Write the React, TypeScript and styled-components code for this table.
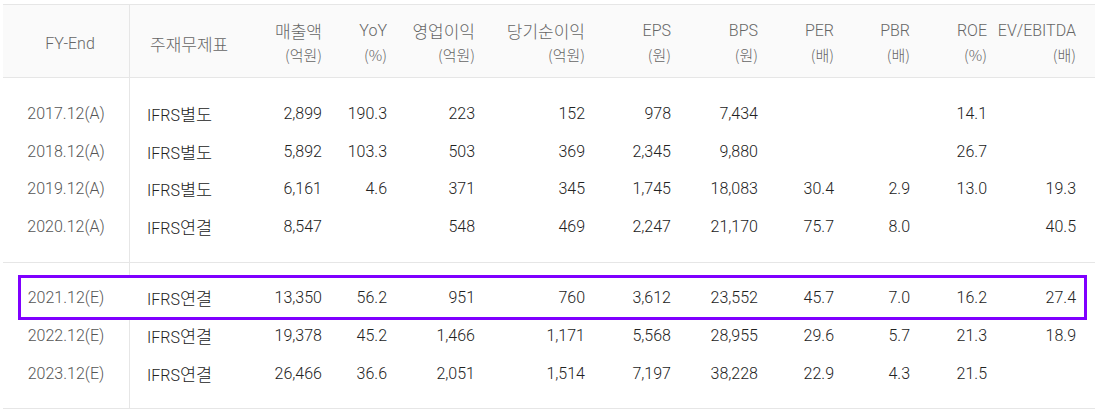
import * as React from "react"
import styled, { createGlobalStyle, css } from 'styled-components';

type Row = string[];

const actualRows: Row[] = [
    ["2017.12(A)", "별도", "2,899", "190.3", "223", "152", "978", "7,434", "", "", "14.1", ""],
    ["2018.12(A)", "별도", "5,892", "103.3", "503", "369", "2,345", "9,880", "", "", "26.7", ""],
    ["2019.12(A)", "별도", "6,161", "4.6", "371", "345", "1,745", "18,083", "30.4", "2.9", "13.0", "19.3"],
    ["2020.12(A)", "연결", "8,547", "", "548", "469", "2,247", "21,170", "75.7", "8.0", "", "40.5"],
];

const estimateRows: Row[] = [
    ["2021.12(E)", "연결", "13,350", "56.2", "951", "760", "3,612", "23,552", "45.7", "7.0", "16.2", "27.4"],
    ["2022.12(E)", "연결", "19,378", "45.2", "1,466", "1,171", "5,568", "28,955", "29.6", "5.7", "21.3", "18.9"],
    ["2023.12(E)", "연결", "26,466", "36.6", "2,051", "1,514", "7,197", "38,228", "22.9", "4.3", "21.5", ""],
];

const headers: [string, string][] = [
    ["매출액", "(억원)"],
    ["YoY", "(%)"],
    ["영업이익", "(억원)"],
    ["당기순이익", "(억원)"],
    ["EPS", "(원)"],
    ["BPS", "(원)"],
    ["PER", "(배)"],
    ["PBR", "(배)"],
    ["ROE", "(%)"],
    ["EV/EBITDA", "(배)"],
];

const isHangul = (s: string) => /[\uac00-\ud7a3]/.test(s);

export default function App() {
    return (
        <>
            <GlobalStyle />
            <Table>
                <Header>
                    <HeadLabel>FY-End</HeadLabel>
                    <HeadLabel $left><Kor>주재무제표</Kor></HeadLabel>
                    {headers.map(([title, unit]) => (
                        <HeadCell key={title}>
                            {isHangul(title) ? <Kor>{title}</Kor> : <span>{title}</span>}
                            <Unit>{unit}</Unit>
                        </HeadCell>
                    ))}
                </Header>
                <Body $top={17} $bottom={17}>
                    {actualRows.map((r) => (
                        <DataRow key={r[0]} $height={37.5}>
                            <Cell $kind={0}>{r[0]}</Cell>
                            <Cell $kind={1}>IFRS<Kor>{r[1]}</Kor></Cell>
                            {r.slice(2).map((v, i) => <Cell key={i} $kind={2}>{v}</Cell>)}
                        </DataRow>
                    ))}
                </Body>
                <Body $top={15} $bottom={16}>
                    {estimateRows.map((r, idx) => (
                        <DataRow key={r[0]} $height={38} $highlight={idx === 0}>
                            <Cell $kind={0}>{r[0]}</Cell>
                            <Cell $kind={1}>IFRS<Kor>{r[1]}</Kor></Cell>
                            {r.slice(2).map((v, i) => <Cell key={i} $kind={2}>{v}</Cell>)}
                        </DataRow>
                    ))}
                </Body>
            </Table>
        </>
    );
}

const GlobalStyle = createGlobalStyle`
    body {
        margin: 0;
        background: #fff;
    }
`;

// FY-End | 주재무제표 | 매출액 | YoY | 영업이익 | 당기순이익 | EPS | BPS | PER | PBR | ROE | EV/EBITDA
const columns = "126px 131px 62px 65px 88px 110px 86px 87px 76px 76px 77px 89px";

const divider = (bg: string) => css`
    background: linear-gradient(#e6e6e6, #e6e6e6) 126px 0 / 1px 100% no-repeat, ${bg};
`;

const Table = styled.div`
    width: 1092px;
    margin: 4px 0 0 3px;
    border-top: 1px solid #e6e6e6;
    font-family: Roboto, "Noto Sans CJK KR", sans-serif;
    font-size: 16px;
    font-weight: 300;
`;

const Kor = styled.span`
    font-family: "Noto Sans CJK KR", sans-serif;
    font-size: 17px;
    font-weight: 300;
`;

const Header = styled.div`
    display: grid;
    grid-template-columns: ${columns};
    padding-right: 19px;
    height: 72px;
    align-items: center;
    border-bottom: 1px solid #e6e6e6;
    ${divider("#fafafa")}
    color: #666;
`;

const HeadLabel = styled.div<{ $left?: boolean }>`
    text-align: ${(p) => (p.$left ? "left" : "center")};
    padding-left: ${(p) => (p.$left ? "21px" : "8px")};
    padding-top: 4px;
`;

const HeadCell = styled.div`
    display: flex;
    flex-direction: column;
    align-items: flex-end;
    line-height: 24px;
    padding-top: 3px;
    white-space: nowrap;
`;

const Unit = styled.span`
    font-family: "Noto Sans CJK KR", sans-serif;
    font-size: 15px;
`;

const Body = styled.div<{ $top: number; $bottom: number }>`
    padding: ${(p) => p.$top}px 0 ${(p) => p.$bottom}px;
    border-bottom: 1px solid #e6e6e6;
    ${divider("#fff")}
`;

const DataRow = styled.div<{ $height: number; $highlight?: boolean }>`
    display: grid;
    grid-template-columns: ${columns};
    padding-right: 19px;
    height: ${(p) => p.$height}px;
    align-items: center;
    position: relative;
    z-index: 0;
    color: #222;

    ${(p) => p.$highlight && css`
        &::before {
            content: "";
            position: absolute;
            top: -3px;
            bottom: -4px;
            left: 15px;
            right: 8px;
            border: 3px solid #7f00ff;
            background: #fff;
            z-index: -1;
        }
    `}
`;

const Cell = styled.div<{ $kind: number }>`
    white-space: nowrap;
    ${(p) => p.$kind === 0 && css`
        text-align: center;
        color: #555;
    `}
    ${(p) => p.$kind === 1 && css`
        text-align: left;
        padding-left: 18px;
        ${Kor} {
            font-size: 17.5px;
        }
    `}
    ${(p) => p.$kind > 1 && css`
        text-align: right;
    `}
`;
